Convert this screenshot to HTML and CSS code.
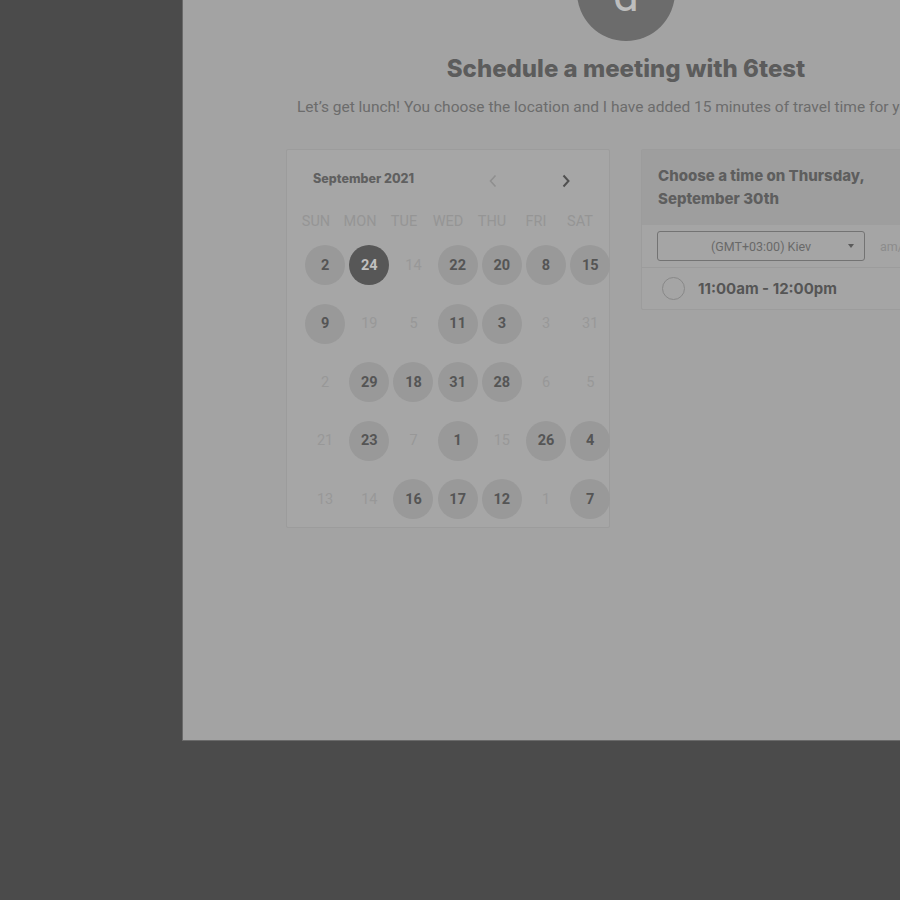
FILE: index.html
```html
<!DOCTYPE html>
<html lang="en">
<head>
<meta charset="utf-8">
<title>Schedule a meeting</title>
<link rel="stylesheet" href="styles.css">
</head>
<body>
<div class="panel">
  <div class="avatar"><span class="avatar-letter">d</span></div>
  <h1 class="title">Schedule a meeting with 6test</h1>
  <p class="subtitle">Let’s get lunch! You choose the location and I have added 15 minutes of travel time for you.</p>
  <div class="cards">
    <div class="calendar">
      <div class="cal-head">
        <span class="month">September 2021</span>
        <div class="nav">
          <span class="nav-btn prev"><svg width="10" height="14" viewBox="0 0 10 14"><path d="M7.5 1.5 L2.5 7 L7.5 12.5" fill="none" stroke="currentColor" stroke-width="1.6"/></svg></span>
          <span class="nav-btn next"><svg width="10" height="14" viewBox="0 0 10 14"><path d="M2.5 1.5 L7.5 7 L2.5 12.5" fill="none" stroke="currentColor" stroke-width="2"/></svg></span>
        </div>
      </div>
      <div class="weekdays">
        <span>SUN</span><span>MON</span><span>TUE</span><span>WED</span><span>THU</span><span>FRI</span><span>SAT</span>
      </div>
      <div class="days">
        <span class="day avail">2</span><span class="day selected">24</span><span class="day off">14</span><span class="day avail">22</span><span class="day avail">20</span><span class="day avail">8</span><span class="day avail">15</span>
        <span class="day avail">9</span><span class="day off">19</span><span class="day off">5</span><span class="day avail">11</span><span class="day avail">3</span><span class="day off">3</span><span class="day off">31</span>
        <span class="day off">2</span><span class="day avail">29</span><span class="day avail">18</span><span class="day avail">31</span><span class="day avail">28</span><span class="day off">6</span><span class="day off">5</span>
        <span class="day off">21</span><span class="day avail">23</span><span class="day off">7</span><span class="day avail">1</span><span class="day off">15</span><span class="day avail">26</span><span class="day avail">4</span>
        <span class="day off">13</span><span class="day off">14</span><span class="day avail">16</span><span class="day avail">17</span><span class="day avail">12</span><span class="day off">1</span><span class="day avail">7</span>
      </div>
    </div>
    <div class="times">
      <div class="times-head">Choose a time on Thursday,<br>September 30th</div>
      <div class="tz-row">
        <div class="tz-select"><span>(GMT+03:00) Kiev</span><span class="caret"></span></div>
        <span class="ampm">am/pm</span>
      </div>
      <div class="slot">
        <span class="radio"></span>
        <span class="slot-text">11:00am - 12:00pm</span>
      </div>
    </div>
  </div>
</div>
</body>
</html>
```

FILE: styles.css
```css
html, body {
  margin: 0;
  padding: 0;
}
body {
  background: #4b4b4b;
  height: 900px;
  overflow: hidden;
  font-family: Roboto, "Liberation Sans", sans-serif;
}
.panel {
  margin-left: 182px;
  width: 886px;
  height: 740px;
  background: #a3a3a3;
  border-left: 1px solid #6a6a6a;
  border-bottom: 1px solid #6a6a6a;
  display: flex;
  flex-direction: column;
  align-items: center;
  overflow: hidden;
}
.avatar {
  flex-shrink: 0;
  width: 98px;
  height: 98px;
  margin-top: -57px;
  border-radius: 50%;
  background: #6c6c6c;
  display: flex;
  justify-content: center;
  align-items: flex-start;
}
.avatar-letter {
  font-family: Roboto, sans-serif;
  font-size: 46px;
  line-height: 46px;
  margin-top: 29px;
  color: #bdbdbd;
}
.title {
  margin: 14px 0 0;
  font-family: Inter, "Liberation Sans", sans-serif;
  font-size: 24px;
  line-height: 28px;
  font-weight: 800;
  color: #5c5c5c;
  white-space: nowrap;
}
.subtitle {
  align-self: flex-start;
  margin: 14px 0 0 114px;
  font-size: 15.5px;
  line-height: 20px;
  color: #6c6c6c;
  white-space: nowrap;
}
.cards {
  align-self: flex-start;
  margin: 32px 0 0 103px;
  display: flex;
  align-items: flex-start;
  gap: 31px;
}
.calendar {
  flex-shrink: 0;
  width: 322px;
  height: 377px;
  background: #a6a6a6;
  border: 1px solid #9c9c9c;
  border-radius: 2px;
}
.cal-head {
  display: flex;
  align-items: center;
  padding: 18px 31px 0 26px;
  height: 20px;
}
.month {
  font-family: Inter, "Liberation Sans", sans-serif;
  font-size: 12.5px;
  font-weight: 800;
  color: #606060;
}
.nav {
  margin-left: auto;
  display: flex;
  gap: 49px;
  margin-top: 6px;
}
.nav-btn {
  width: 24px;
  height: 14px;
  display: flex;
  justify-content: center;
}
.prev { color: #8f8f8f; }
.next { color: #505050; }
.weekdays {
  display: grid;
  grid-template-columns: repeat(7, 44px);
  margin: 24px 0 0 7px;
  font-size: 14.5px;
  line-height: 20px;
  color: #959595;
  text-align: center;
}
.days {
  display: grid;
  grid-template-columns: repeat(7, 44.2px);
  grid-auto-rows: 40px;
  row-gap: 18.5px;
  margin: 13px 0 0 16px;
}
.day {
  justify-self: center;
  width: 40px;
  height: 40px;
  border-radius: 50%;
  display: flex;
  align-items: center;
  justify-content: center;
  font-size: 14.5px;
}
.avail {
  background: #999999;
  color: #555555;
  font-weight: 700;
}
.selected {
  background: #575757;
  color: #c0c0c0;
  font-weight: 700;
}
.off {
  color: #989898;
}
.times {
  flex-shrink: 0;
  width: 322px;
  background: #a5a5a5;
  border: 1px solid #9c9c9c;
  border-radius: 2px;
}
.times-head {
  background: #9e9e9e;
  padding: 14px 16px 15px;
  font-family: Inter, "Liberation Sans", sans-serif;
  font-size: 15px;
  line-height: 23px;
  font-weight: 800;
  color: #5e5e5e;
  white-space: nowrap;
}
.tz-row {
  display: flex;
  align-items: center;
  padding: 6px 0 6px 15px;
  border-bottom: 1px solid #9c9c9c;
}
.tz-select {
  box-sizing: border-box;
  width: 208px;
  height: 30px;
  border: 1px solid #737373;
  border-radius: 3px;
  display: flex;
  align-items: center;
  justify-content: center;
  position: relative;
  font-size: 12.5px;
  color: #696969;
}
.caret {
  position: absolute;
  right: 10px;
  top: 12px;
  border-left: 3.5px solid transparent;
  border-right: 3.5px solid transparent;
  border-top: 4px solid #5a5a5a;
}
.ampm {
  margin-left: 15px;
  font-size: 12.5px;
  color: #8c8c8c;
}
.slot {
  display: flex;
  align-items: center;
  height: 41px;
  padding-left: 20px;
}
.radio {
  box-sizing: border-box;
  width: 23px;
  height: 23px;
  border-radius: 50%;
  border: 1.5px solid #888888;
}
.slot-text {
  margin-left: 13px;
  font-family: Inter, "Liberation Sans", sans-serif;
  font-size: 15px;
  font-weight: 700;
  color: #555555;
}
```
